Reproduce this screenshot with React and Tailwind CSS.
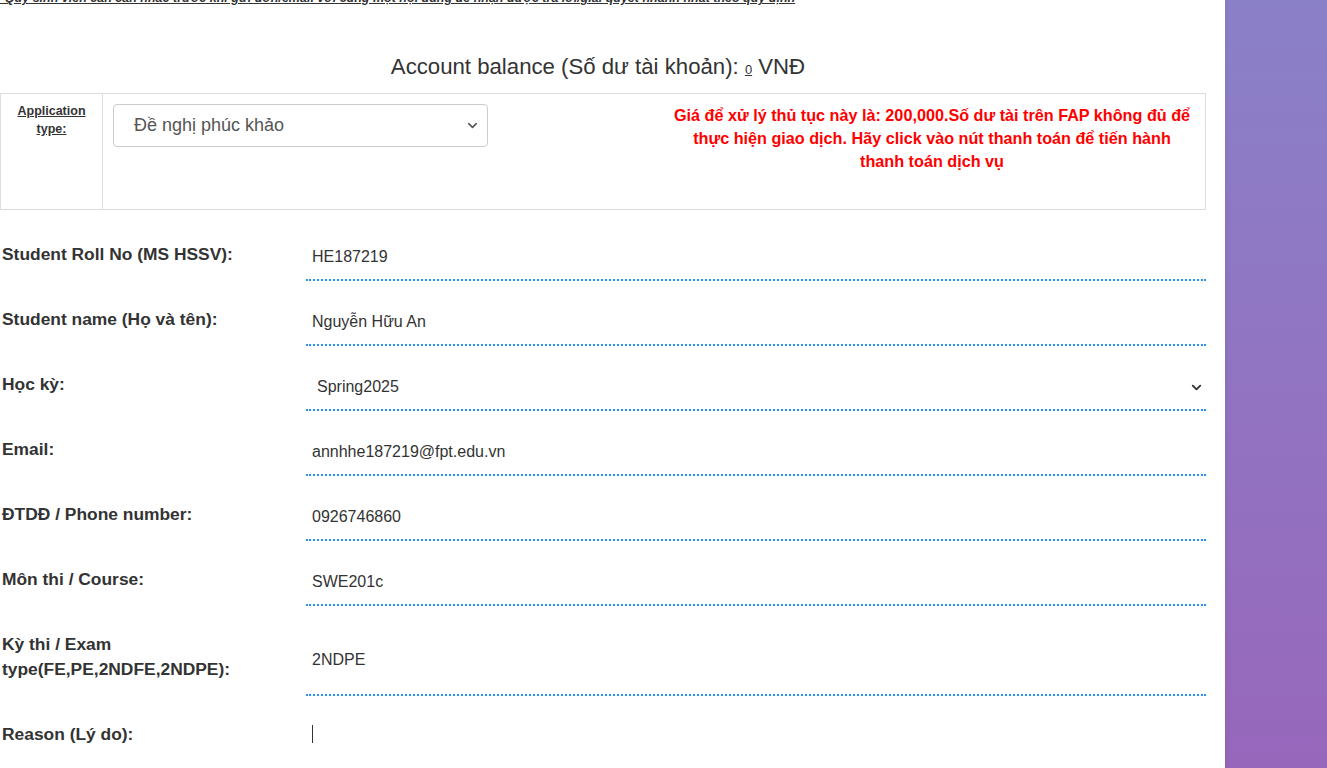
import { ChevronDown } from "lucide-react";

const rows = [
  { label: "Student Roll No (MS HSSV):", value: "HE187219" },
  { label: "Student name (Họ và tên):", value: "Nguyễn Hữu An" },
  { label: "Học kỳ:", value: "Spring2025", select: true },
  { label: "Email:", value: "annhhe187219@fpt.edu.vn" },
  { label: "ĐTDĐ / Phone number:", value: "0926746860" },
  { label: "Môn thi / Course:", value: "SWE201c" },
  { label: "Kỳ thi / Exam type(FE,PE,2NDFE,2NDPE):", value: "2NDPE" },
];

function FormRow({ label, value, select }) {
  return (
    <div className="flex mb-[19px]">
      <label className="w-[306px] shrink-0 pl-[2px] pr-[40px] pt-[7px] pb-[14px] text-[17.4px] leading-[25px] font-bold text-[#333]">
        {label}
      </label>
      <div className="flex-1 flex items-center border-b-2 border-dotted border-[#2592ef] text-[16px] text-[#333]">
        <span className={select ? "pl-[11px]" : "pl-[6px]"}>{value}</span>
        {select && (
          <ChevronDown size={15} strokeWidth={3} className="ml-auto mr-[2px] text-[#333]" />
        )}
      </div>
    </div>
  );
}

export default function App() {
  return (
    <div className="flex h-screen overflow-hidden font-['Liberation_Sans',Arial,sans-serif]">
      {/* Main white panel */}
      <main className="w-[1225px] shrink-0 bg-white overflow-hidden">
        <div className="w-[1206px]">
          <p className="-mt-[9px] text-[12.5px] leading-[14px] font-bold italic underline text-[#333]">
            *Quý sinh viên cần cân nhắc trước khi gửi đơn/email với cùng một nội dung để nhận được trả lời/giải quyết nhanh nhất theo quy định
          </p>

          <h3 className="mt-[48px] pr-[10px] text-center text-[22.2px] leading-[28px] text-[#333]">
            Account balance (Số dư tài khoản): <span className="text-[13px] underline">0</span> VNĐ
          </h3>

          {/* Application type table */}
          <div className="mt-[9px] flex h-[117px] border border-[#ddd]">
            <div className="w-[102px] shrink-0 border-r border-[#ddd] pt-[8px] text-center text-[12.5px] leading-[18px]">
              <span className="font-bold underline text-[#333]">
                Application
                <br />
                type:
              </span>
            </div>
            <div className="flex-1 flex pt-[10px] pl-[10px] pr-[12px]">
              <div className="w-[375px] h-[43px] shrink-0 flex items-center border border-[#ccc] rounded-[4px] pl-[20px] pr-[7px] text-[18px] text-[#555]">
                Đề nghị phúc khảo
                <ChevronDown size={15} strokeWidth={2.5} className="ml-auto text-[#555]" />
              </div>
              <p className="ml-auto w-[522px] text-center text-[16.2px] leading-[23px] font-bold text-[#ff0000]">
                Giá để xử lý thủ tục này là: 200,000.Số dư tài trên FAP không đủ để thực hiện giao dịch. Hãy click vào nút thanh toán để tiến hành thanh toán dịch vụ
              </p>
            </div>
          </div>

          {/* Form */}
          <form className="mt-[25px]">
            {rows.map((r) => (
              <FormRow key={r.label} {...r} />
            ))}
            <div className="flex">
              <label className="w-[306px] shrink-0 pl-[2px] pt-[7px] text-[17.4px] leading-[25px] font-bold text-[#333]">
                Reason (Lý do):
              </label>
              <div className="flex-1 pt-[10px] pl-[6px] h-[80px]">
                <span className="block w-[1px] h-[18px] bg-[#333]" />
              </div>
            </div>
          </form>
        </div>
      </main>

      {/* Purple background */}
      <div className="flex-1 bg-gradient-to-b from-[#8a80c8] to-[#9767bc] shadow-[inset_6px_0_6px_-4px_rgba(0,0,0,0.06)]" />
    </div>
  );
}
